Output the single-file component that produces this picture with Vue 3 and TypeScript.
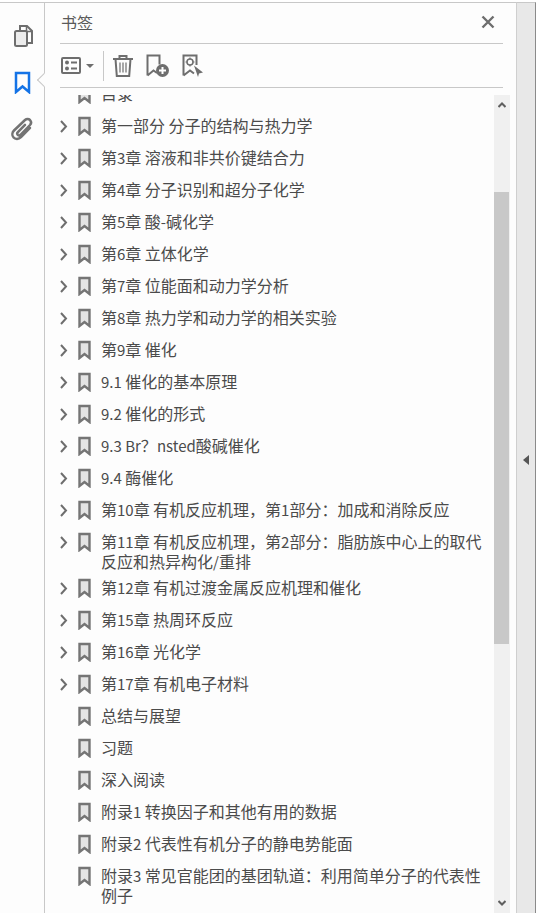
<script setup lang="ts">
interface Row { text: string; expand: boolean; parts: { text: string; latin: boolean }[] }
const titles: string[] = [
  '第一部分 分子的结构与热力学', '第3章 溶液和非共价键结合力', '第4章 分子识别和超分子化学', '第5章 酸-碱化学',
  '第6章 立体化学', '第7章 位能面和动力学分析', '第8章 热力学和动力学的相关实验', '第9章 催化',
  '9.1 催化的基本原理', '9.2 催化的形式', '9.3 Br？nsted酸碱催化', '9.4 酶催化',
  '第10章 有机反应机理，第1部分：加成和消除反应', '第11章 有机反应机理，第2部分：脂肪族中心上的取代反应和热异构化/重排',
  '第12章 有机过渡金属反应机理和催化', '第15章 热周环反应', '第16章 光化学', '第17章 有机电子材料',
]
const leaves: string[] = ['总结与展望', '习题', '深入阅读', '附录1 转换因子和其他有用的数据', '附录2 代表性有机分子的静电势能面', '附录3 常见官能团的基团轨道：利用简单分子的代表性例子']

function split(text: string): Row['parts'] {
  return text
    .split(/([\x20-\x7e]+)/)
    .filter((s) => s.length > 0)
    .map((s) => ({ text: s, latin: /^[\x20-\x7e]+$/.test(s) }))
}
function toRow(text: string, expand: boolean): Row {
  return { text, expand, parts: split(text) }
}
const rows: Row[] = [
  toRow('目录', false),
  ...titles.map((t) => toRow(t, true)),
  ...leaves.map((t) => toRow(t, false)),
]
</script>

<template>
  <div class="app">
    <aside class="rail">
      <svg class="rail-icon" width="24" height="24" viewBox="0 0 24 24" fill="none" stroke="#6e6e6e" stroke-width="2">
        <path d="M10 7V3h7l5 5v12h-5" />
        <path d="M16.500 3v5.500H22" stroke-width="1.500" />
        <rect x="5" y="8" width="12" height="15" rx="1.500" fill="#ececec" />
      </svg>
      <svg class="rail-icon" width="24" height="24" viewBox="0 0 24 24" fill="none" stroke="#1473e6" stroke-width="2.500">
        <path d="M6 3h13v19l-6.500-5.500L6 22z" />
      </svg>
      <svg class="rail-icon" width="24" height="24" viewBox="0 0 24 24" fill="none" stroke="#737373" stroke-width="2.500" stroke-linecap="round">
        <path d="M15 7.800l-7.100 7.300c-.8.800-.8 2-.1 2.800.7.700 1.800.7 2.700-.1L20 8c1.300-1.500 1.300-3.600 0-5-1.300-1.300-3.500-1.300-5 0L4 13.500c-2 2-2.200 5-.4 7 1.600 1.900 5.100 1.900 7.400-.3l9-9.200" />
      </svg>
      <span class="notch"></span>
    </aside>

    <main class="panel">
      <header class="head">
        <span class="title">书签</span>
        <svg width="14" height="14" viewBox="0 0 14 14" stroke="#6e6e6e" stroke-width="2.400">
          <path d="M1.500 1.500l11 11M12.500 1.500l-11 11" />
        </svg>
      </header>
      <div class="tools">
        <svg width="20" height="17" viewBox="0 0 20 17" fill="none" stroke="#6e6e6e" stroke-width="2">
          <rect x="1" y="1" width="18" height="15" rx="1" />
          <circle cx="6" cy="5.500" r="2" fill="#6e6e6e" stroke="none" />
          <circle cx="6" cy="11.500" r="2" fill="#6e6e6e" stroke="none" />
          <path d="M10 5.500h6M10 11.500h6" />
        </svg>
        <span class="caret"></span>
        <span class="sep"></span>
        <svg class="trash" width="22" height="22" viewBox="0 0 22 22" fill="none" stroke="#6e6e6e" stroke-width="2">
          <path d="M1 4h20M7.500 4V1h7v3M3.500 4l1.300 17h12.400L18.500 4" />
          <path d="M8 7.500v10M11 7.500v10M14 7.500v10" stroke-width="1.200" />
        </svg>
        <svg class="add" width="23" height="23" viewBox="0 0 23 23" fill="none" stroke="#6e6e6e" stroke-width="2">
          <path d="M1.500 21.500V1.500h12v9M1.500 21.500l6-5 3.500 2.500" />
          <circle cx="16.500" cy="16.500" r="6.500" fill="#6e6e6e" stroke="none" />
          <path d="M13 16.500h7M16.500 13v7" stroke="#fff" stroke-width="2" />
        </svg>
        <svg class="search" width="22" height="23" viewBox="0 0 22 23" fill="none" stroke="#6e6e6e" stroke-width="2">
          <path d="M1.500 21.500V1.500h13V11M1.500 21.500l6.500-5 4 3" />
          <circle cx="8" cy="8" r="3" stroke-width="1.500" />
          <path d="M8 3.500v1.500M8 11v1.500M3.500 8H5M11 8h1.500" stroke-width="1.200" />
          <path d="M12 11.500l9 7-4 1-1 3.500z" fill="#6e6e6e" stroke="none" />
        </svg>
      </div>
      <div class="body">
        <div class="list-clip">
          <div class="list">
            <div v-for="row in rows" :key="row.text" class="row">
              <span class="chev-slot">
                <svg v-if="row.expand" width="8" height="14" viewBox="0 0 8 14" fill="none" stroke="#6e6e6e" stroke-width="2">
                  <path d="M1 2l5 5.500L1 13" />
                </svg>
              </span>
              <svg class="mark" width="14" height="20" viewBox="0 0 14 20" fill="#e4e4e4" stroke="#757575" stroke-width="2.400">
                <path d="M1.500 2h10v16l-5-4-5 4z" />
              </svg>
              <span class="label"><span v-for="(p, i) in row.parts" :key="i" :class="{ latin: p.latin }">{{ p.text }}</span></span>
            </div>
          </div>
        </div>
        <div class="scrollbar">
          <svg class="sb-arrow" width="8" height="6" viewBox="0 0 8 6" fill="none" stroke="#5f5f5f" stroke-width="2"><path d="M.500 5L4 1.500 7.500 5" /></svg>
          <div class="sb-track"><div class="sb-thumb"></div></div>
          <svg class="sb-arrow" width="8" height="6" viewBox="0 0 8 6" fill="none" stroke="#5f5f5f" stroke-width="2"><path d="M.500 1L4 4.500 7.500 1" /></svg>
        </div>
      </div>
    </main>

    <aside class="strip"><span class="strip-arrow"></span></aside>
  </div>
</template>

<style scoped>
.app {
  width: 536px;
  height: 913px;
  display: flex;
  overflow: hidden;
  box-sizing: border-box;
  padding-top: 2px;
  background: #fff;
  font-family: "Noto Sans CJK SC", "Liberation Sans", sans-serif;
  color: #4b4b4b;
}
.rail {
  position: relative;
  width: 45px;
  flex: none;
  box-sizing: border-box;
  border-top: 1px solid #c8c8c8;
  border-right: 1px solid #c8c8c8;
  background: #fdfdfd;
  display: flex;
  flex-direction: column;
  align-items: center;
  gap: 23px;
  padding: 20px 1px 0 0;
}
.rail-icon { display: block; }
.notch {
  position: absolute;
  left: 39px;
  top: 72px;
  width: 10px;
  height: 10px;
  box-sizing: border-box;
  background: #fdfdfd;
  border-left: 1px solid #c8c8c8;
  border-bottom: 1px solid #c8c8c8;
  transform: rotate(45deg);
}
.panel {
  flex: 1;
  min-width: 0;
  display: flex;
  flex-direction: column;
  background: #fdfdfd;
  border-top: 1px solid #c8c8c8;
}
.head {
  height: 41px;
  box-sizing: border-box;
  margin: 0 13px 0 15px;
  padding: 0 8px 2px 1px;
  display: flex;
  align-items: center;
  justify-content: space-between;
  border-bottom: 1px solid #c8c8c8;
}
.title { font-size: 16px; line-height: 36px; color: #5a5a5a; }
.tools {
  height: 44px;
  box-sizing: border-box;
  margin: 0 13px 0 15px;
  padding-left: 1px;
  display: flex;
  align-items: center;
  border-bottom: 1px solid #c8c8c8;
}
.caret {
  margin-left: 5px;
  border: 4px solid transparent;
  border-top-color: #6e6e6e;
  border-bottom-width: 0;
}
.sep { width: 1px; height: 30px; margin: 0 8px 0 9px; background: #c8c8c8; }
.add { margin-left: 12px; }
.search { margin-left: 13px; }
.body {
  flex: 1;
  min-height: 0;
  display: flex;
  overflow: hidden;
  margin-right: 6px;
  padding-top: 7px;
}
.list-clip { flex: 1; min-width: 0; overflow: hidden; }
.list {
  margin-top: -17px;
  padding-left: 15px;
}
.row {
  display: flex;
  align-items: flex-start;
  min-height: 32px;
  box-sizing: border-box;
  padding-top: 6px;
}
.chev-slot { width: 18px; height: 20px; flex: none; display: flex; align-items: center; }
.mark { flex: none; margin-right: 9px; }
.label { flex: 1; min-width: 0; font-size: 16px; line-height: 20px; margin-top: -1px; padding: 0 8px 1px 0; }
.latin { font-size: 15px; line-height: 1; }
.scrollbar {
  width: 16px;
  flex: none;
  background: #f0f0f0;
  display: flex;
  flex-direction: column;
  align-items: center;
}
.sb-arrow { flex: none; margin: 7px 0; }
.sb-track { flex: 1; width: 100%; padding-top: 77px; padding-bottom: 249px; box-sizing: border-box; min-height: 0; display: flex; }
.sb-thumb { flex: 1; background: #c8c8c8; margin-right: 1px; }
.strip {
  width: 20px;
  flex: none;
  box-sizing: border-box;
  border-left: 1px solid #cfcfcf;
  border-right: 1px solid #8a8a8a;
  border-top: 1px solid #c8c8c8;
  background: #e8e8e8;
  display: flex;
  align-items: center;
  justify-content: center;
}
.strip-arrow {
  border: 5px solid transparent;
  border-right: 6px solid #555;
  border-left-width: 0;
  margin-top: 4px;
}
</style>
